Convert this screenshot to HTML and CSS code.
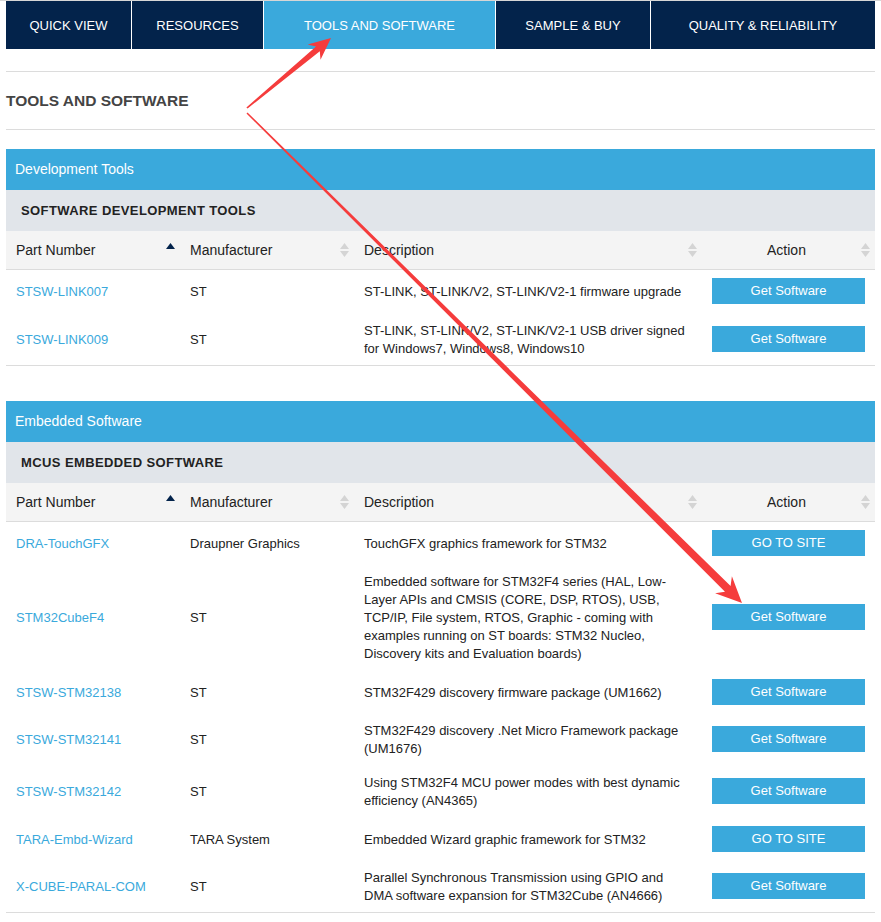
FILE: index.html
```html
<!DOCTYPE html>
<html>
<head>
<meta charset="utf-8">
<link rel="stylesheet" href="styles.css">
</head>
<body>
<div class="page">
  <nav class="tabs">
    <a class="tab">QUICK VIEW</a>
    <a class="tab">RESOURCES</a>
    <a class="tab active">TOOLS AND SOFTWARE</a>
    <a class="tab">SAMPLE &amp; BUY</a>
    <a class="tab">QUALITY &amp; RELIABILITY</a>
  </nav>

  <h2 class="page-title">TOOLS AND SOFTWARE</h2>

  <section class="group">
    <div class="group-bar">Development Tools</div>
    <div class="group-sub">SOFTWARE DEVELOPMENT TOOLS</div>
    <table class="grid">
      <colgroup><col class="c1"><col class="c2"><col class="c3"><col class="c4"></colgroup>
      <thead>
        <tr>
          <th><div class="th-in"><span>Part Number</span><svg class="sort" viewBox="0 0 9 14"><path d="M0 6 L4.5 0 L9 6Z" fill="#03234b"/></svg></div></th>
          <th><div class="th-in"><span>Manufacturer</span><svg class="sort" viewBox="0 0 9 14"><path d="M0 6 L4.5 0 L9 6Z M0 8 L9 8 L4.5 14Z" fill="#d4d4d4"/></svg></div></th>
          <th><div class="th-in"><span>Description</span><svg class="sort" viewBox="0 0 9 14"><path d="M0 6 L4.5 0 L9 6Z M0 8 L9 8 L4.5 14Z" fill="#d4d4d4"/></svg></div></th>
          <th><div class="th-in center"><span>Action</span><svg class="sort" viewBox="0 0 9 14"><path d="M0 6 L4.5 0 L9 6Z M0 8 L9 8 L4.5 14Z" fill="#d4d4d4"/></svg></div></th>
        </tr>
      </thead>
      <tbody>
        <tr><td><a class="pn">STSW-LINK007</a></td><td>ST</td><td>ST-LINK, ST-LINK/V2, ST-LINK/V2-1 firmware upgrade</td><td><a class="btn">Get Software</a></td></tr>
        <tr><td><a class="pn">STSW-LINK009</a></td><td>ST</td><td>ST-LINK, ST-LINK/V2, ST-LINK/V2-1 USB driver signed for Windows7, Windows8, Windows10</td><td><a class="btn">Get Software</a></td></tr>
      </tbody>
    </table>
  </section>

  <section class="group">
    <div class="group-bar">Embedded Software</div>
    <div class="group-sub">MCUS EMBEDDED SOFTWARE</div>
    <table class="grid">
      <colgroup><col class="c1"><col class="c2"><col class="c3"><col class="c4"></colgroup>
      <thead>
        <tr>
          <th><div class="th-in"><span>Part Number</span><svg class="sort" viewBox="0 0 9 14"><path d="M0 6 L4.5 0 L9 6Z" fill="#03234b"/></svg></div></th>
          <th><div class="th-in"><span>Manufacturer</span><svg class="sort" viewBox="0 0 9 14"><path d="M0 6 L4.5 0 L9 6Z M0 8 L9 8 L4.5 14Z" fill="#d4d4d4"/></svg></div></th>
          <th><div class="th-in"><span>Description</span><svg class="sort" viewBox="0 0 9 14"><path d="M0 6 L4.5 0 L9 6Z M0 8 L9 8 L4.5 14Z" fill="#d4d4d4"/></svg></div></th>
          <th><div class="th-in center"><span>Action</span><svg class="sort" viewBox="0 0 9 14"><path d="M0 6 L4.5 0 L9 6Z M0 8 L9 8 L4.5 14Z" fill="#d4d4d4"/></svg></div></th>
        </tr>
      </thead>
      <tbody>
        <tr><td><a class="pn">DRA-TouchGFX</a></td><td>Draupner Graphics</td><td>TouchGFX graphics framework for STM32</td><td><a class="btn">GO TO SITE</a></td></tr>
        <tr><td><a class="pn">STM32CubeF4</a></td><td>ST</td><td>Embedded software for STM32F4 series (HAL, Low-Layer APIs and CMSIS (CORE, DSP, RTOS), USB, TCP/IP, File system, RTOS, Graphic - coming with examples running on ST boards: STM32 Nucleo, Discovery kits and Evaluation boards)</td><td><a class="btn">Get Software</a></td></tr>
        <tr><td><a class="pn">STSW-STM32138</a></td><td>ST</td><td>STM32F429 discovery firmware package (UM1662)</td><td><a class="btn">Get Software</a></td></tr>
        <tr><td><a class="pn">STSW-STM32141</a></td><td>ST</td><td>STM32F429 discovery .Net Micro Framework package (UM1676)</td><td><a class="btn">Get Software</a></td></tr>
        <tr><td><a class="pn">STSW-STM32142</a></td><td>ST</td><td>Using STM32F4 MCU power modes with best dynamic efficiency (AN4365)</td><td><a class="btn">Get Software</a></td></tr>
        <tr><td><a class="pn">TARA-Embd-Wizard</a></td><td>TARA System</td><td>Embedded Wizard graphic framework for STM32</td><td><a class="btn">GO TO SITE</a></td></tr>
        <tr><td><a class="pn">X-CUBE-PARAL-COM</a></td><td>ST</td><td>Parallel Synchronous Transmission using GPIO and DMA software expansion for STM32Cube (AN4666)</td><td><a class="btn">Get Software</a></td></tr>
      </tbody>
    </table>
  </section>
</div>

<svg class="annot" width="881" height="922" viewBox="0 0 881 922">
  <polygon fill="#f53c3c" points="246.4,107.5 316.0,46.6 307.7,44.4 331,38 320.5,59.8 319.8,51.2 247.6,108.5"/>
  <polygon fill="#f53c3c" points="247.5,112.5 730.6,586.1 731.9,576.2 742,603 715.1,593.2 725.0,591.7 246.5,113.5"/>
</svg>
</body>
</html>
```

FILE: styles.css
```css
html, body {
  margin: 0;
  padding: 0;
  background: #fff;
}

body {
  border-top: 1px solid #d6d6d6;
  font-family: "Liberation Sans", Arial, sans-serif;
  font-size: 13px;
  color: #222;
  position: relative;
}

.page {
  padding: 0 6px 20px;
}

.tabs {
  display: grid;
  grid-template-columns: 125px 131px 231px 154px 224px;
  column-gap: 1px;
  height: 48px;
}

.tab {
  background: #03234b;
  color: #fff;
  font-size: 13px;
  display: flex;
  align-items: center;
  justify-content: center;
  text-decoration: none;
}

.tab.active {
  background: #3aa9dc;
}

.page-title {
  margin: 22px 0 0;
  border-top: 1px solid #dcdcdc;
  border-bottom: 1px solid #dcdcdc;
  height: 57px;
  line-height: 57px;
  font-size: 15.5px;
  font-weight: bold;
  color: #444;
}

.group {
  margin-top: 19px;
}

.group + .group {
  margin-top: 35px;
}

.group-bar {
  background: #3aa9dc;
  color: #fff;
  font-size: 14px;
  height: 41px;
  line-height: 41px;
  padding-left: 9px;
}

.group-sub {
  background: #e1e5ea;
  color: #222;
  font-size: 13px;
  font-weight: bold;
  letter-spacing: 0.4px;
  height: 41px;
  line-height: 41px;
  padding-left: 15px;
}

.grid {
  width: 100%;
  table-layout: fixed;
  border-collapse: collapse;
  border-bottom: 1px solid #dcdcdc;
}

.c1 { width: 174px; }
.c2 { width: 174px; }
.c3 { width: 348px; }
.c4 { width: 173px; }

.grid th {
  background: #f4f4f4;
  height: 38px;
  padding: 0 5px 0 10px;
  font-weight: normal;
  font-size: 14px;
  color: #222;
  text-align: left;
  border-bottom: 1px solid #dcdcdc;
}

.th-in {
  display: flex;
  align-items: center;
  justify-content: space-between;
}

.th-in.center span {
  flex: 1;
  text-align: center;
}

.sort {
  width: 9px;
  height: 14px;
  flex: none;
}

.grid tbody tr {
  height: 43px;
}

.grid td {
  padding: 9px 10px 7px;
  line-height: 18px;
  vertical-align: middle;
}

.grid td:last-child {
  padding: 8px 10px;
}

.pn {
  color: #3aa9dc;
  text-decoration: none;
}

.btn {
  display: block;
  height: 26px;
  line-height: 26px;
  background: #3aa9dc;
  color: #fff;
  text-align: center;
  font-size: 13px;
  text-decoration: none;
}

.annot {
  position: absolute;
  left: 0;
  top: -1px;
  pointer-events: none;
}
```
